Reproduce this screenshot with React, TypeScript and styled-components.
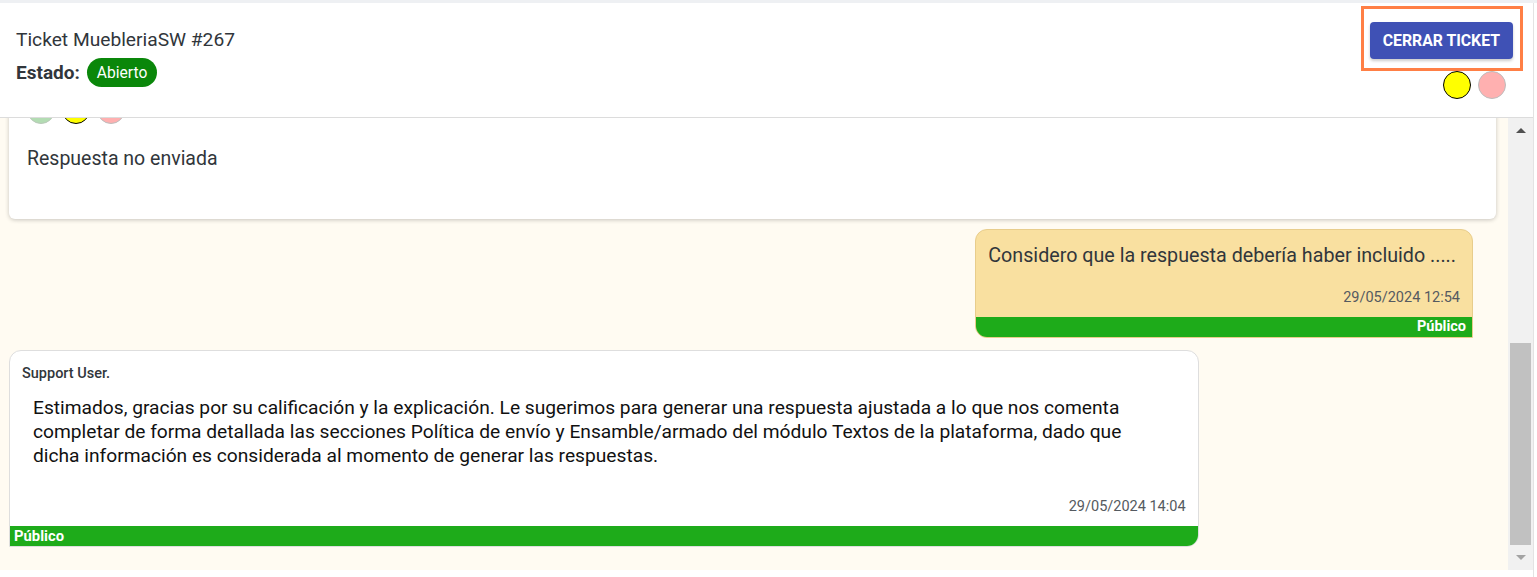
import styled, { createGlobalStyle } from "styled-components";

const GlobalStyle = createGlobalStyle`
    body {
        margin: 0;
        background: #ffffff;
        font-family: Roboto, "Liberation Sans", sans-serif;
        color: #31363b;
    }
    * { box-sizing: border-box; }
`

const Wrapper = styled.div`
    border-top: 3px solid #eef0f3;
`
const Panel = styled.div`
    width: 1534px;
    height: 574px;
    display: flex;
    flex-direction: column;
    border-right: 1px solid #e3e3e3;
    padding-bottom: 7px;
    background: #ffffff;
`
const Header = styled.header`
    height: 115px;
    flex-shrink: 0;
    display: flex;
    justify-content: space-between;
    padding: 0 10px 0 16px;
    border-bottom: 1px solid #dcdcdc;
`
const HeaderInfo = styled.div`
    display: flex;
    flex-direction: column;
    padding-top: 25px;
`
const Title = styled.h1`
    margin: 0;
    font-size: 19.2px;
    line-height: 24px;
    font-weight: 400;
    color: #31363b;
`
const StatusRow = styled.div`
    display: flex;
    align-items: center;
    gap: 7px;
    margin-top: 6px;
`
const StatusLabel = styled.span`
    font-size: 19px;
    font-weight: 700;
`
const Badge = styled.span`
    display: inline-flex;
    align-items: center;
    height: 29px;
    padding: 0 10px;
    border-radius: 15px;
    background: #0a870a;
    color: #ffffff;
    font-size: 15.6px;
`
const HeaderActions = styled.div`
    display: flex;
    flex-direction: column;
    align-items: flex-end;
    padding-top: 3px;
`
const Highlight = styled.div`
    border: 3px solid #ff7f45;
    padding: 13px 7px 9px 6px;
`
const CloseButton = styled.button`
    height: 37px;
    padding: 0 13px;
    border: none;
    border-radius: 4px;
    background: #3f51b5;
    color: #ffffff;
    font-family: inherit;
    font-size: 15.8px;
    font-weight: 700;
    text-transform: uppercase;
    box-shadow: 0 2px 3px rgba(0,0,0,0.2);
    cursor: pointer;
`
const DotRow = styled.div<{ $pad?: number }>`
    display: flex;
    gap: 7px;
    padding-right: ${p => p.$pad ?? 0}px;
`
const Dot = styled.span<{ $color: string; $edge: string }>`
    width: 28px;
    height: 28px;
    border-radius: 50%;
    background: ${p => p.$color};
    border: 1px solid ${p => p.$edge};
`
const Body = styled.div`
    flex: 1;
    min-height: 0;
    display: flex;
`
const Chat = styled.div`
    flex: 1;
    overflow: hidden;
    display: flex;
    flex-direction: column;
    justify-content: flex-end;
    padding: 0 12px 23px 9px;
    background: #fffbf2;
`
const NoteCard = styled.div`
    flex-shrink: 0;
    background: #ffffff;
    border-radius: 6px;
    box-shadow: 0 1px 4px rgba(0,0,0,0.22);
    padding: 20px 18px 48px;
`
const NoteText = styled.p`
    margin: 23px 0 0;
    font-size: 19.5px;
    line-height: 24px;
    color: #31363b;
`
const Bubble = styled.div<{ $mine?: boolean }>`
    flex-shrink: 0;
    display: flex;
    flex-direction: column;
    overflow: hidden;
    ${p => p.$mine ? `
        align-self: flex-end;
        margin: 10px 23px 0 0;
        background: #f9e0a0;
        border: 1px solid #e8cd8c;
        border-radius: 12px 12px 0 12px;
    ` : `
        align-self: flex-start;
        width: 80%;
        margin-top: 12px;
        background: #ffffff;
        border: 1px solid #dedede;
        border-radius: 12px 12px 12px 0;
    `}
`
const Author = styled.div`
    padding: 14px 12px 0;
    font-size: 14.5px;
    line-height: 18px;
    font-weight: 500;
    color: #31363b;
`
const Message = styled.p<{ $mine?: boolean }>`
    margin: 0;
    font-size: ${p => p.$mine ? 19.7 : 19.2}px;
    line-height: 24px;
    padding: ${p => p.$mine ? "14px 16px 0 12px" : "13px 36px 0 23px"};
    color: ${p => p.$mine ? "#31363b" : "#111111"};
`
const Stamp = styled.div<{ $gap: number }>`
    margin-top: ${p => p.$gap}px;
    padding-right: 12px;
    text-align: right;
    font-size: 14.5px;
    line-height: 18px;
    color: #555a60;
`
const VisibilityBar = styled.div<{ $mine?: boolean }>`
    margin-top: 10px;
    height: 20px;
    line-height: 20px;
    padding: ${p => p.$mine ? "0 6px 0 0" : "0 0 0 4px"};
    text-align: ${p => p.$mine ? "right" : "left"};
    background: #1eab1a;
    color: #ffffff;
    font-size: ${p => p.$mine ? 14.5 : 14.8}px;
    font-weight: 700;
`
const Scrollbar = styled.div`
    width: 25px;
    flex-shrink: 0;
    display: flex;
    flex-direction: column;
    background: #f1f1f1;
`
const Arrow = styled.div<{ $down?: boolean }>`
    height: 25px;
    display: flex;
    align-items: center;
    justify-content: center;
    &::after {
        content: "";
        border-left: 5px solid transparent;
        border-right: 5px solid transparent;
        ${p => p.$down
            ? "border-top: 5px solid #a3a3a3;"
            : "border-bottom: 5px solid #505050;"}
    }
`
const Track = styled.div`
    flex: 1;
    display: flex;
    flex-direction: column;
    justify-content: flex-end;
    padding: 0 2px;
`
const Thumb = styled.div`
    height: 202px;
    background: #c1c1c1;
`

const dots = {
    green: ["#b3dcb3", "#b9c9b9"],
    yellow: ["#ffff00", "#000000"],
    pink: ["#ffb0b0", "#bdbdbd"],
}

export default function App() {
    return (
        <Wrapper>
            <GlobalStyle />
            <Panel>
                <Header>
                    <HeaderInfo>
                        <Title>Ticket MuebleriaSW #267</Title>
                        <StatusRow>
                            <StatusLabel>Estado:</StatusLabel>
                            <Badge>Abierto</Badge>
                        </StatusRow>
                    </HeaderInfo>
                    <HeaderActions>
                        <Highlight>
                            <CloseButton>Cerrar ticket</CloseButton>
                        </Highlight>
                        <DotRow $pad={17}>
                            <Dot $color={dots.yellow[0]} $edge={dots.yellow[1]} />
                            <Dot $color={dots.pink[0]} $edge={dots.pink[1]} />
                        </DotRow>
                    </HeaderActions>
                </Header>
                <Body>
                    <Chat>
                        <NoteCard>
                            <DotRow>
                                <Dot $color={dots.green[0]} $edge={dots.green[1]} />
                                <Dot $color={dots.yellow[0]} $edge={dots.yellow[1]} />
                                <Dot $color={dots.pink[0]} $edge={dots.pink[1]} />
                            </DotRow>
                            <NoteText>Respuesta no enviada</NoteText>
                        </NoteCard>
                        <Bubble $mine>
                            <Message $mine>Considero que la respuesta debería haber incluido .....</Message>
                            <Stamp $gap={21}>29/05/2024 12:54</Stamp>
                            <VisibilityBar $mine>Público</VisibilityBar>
                        </Bubble>
                        <Bubble>
                            <Author>Support User.</Author>
                            <Message>
                                Estimados, gracias por su calificación y la explicación. Le sugerimos para generar una respuesta ajustada a lo que nos comenta completar de forma detallada las secciones Política de envío y Ensamble/armado del módulo Textos de la plataforma, dado que dicha información es considerada al momento de generar las respuestas.
                            </Message>
                            <Stamp $gap={30}>29/05/2024 14:04</Stamp>
                            <VisibilityBar>Público</VisibilityBar>
                        </Bubble>
                    </Chat>
                    <Scrollbar>
                        <Arrow />
                        <Track>
                            <Thumb />
                        </Track>
                        <Arrow $down />
                    </Scrollbar>
                </Body>
            </Panel>
        </Wrapper>
    )
}
